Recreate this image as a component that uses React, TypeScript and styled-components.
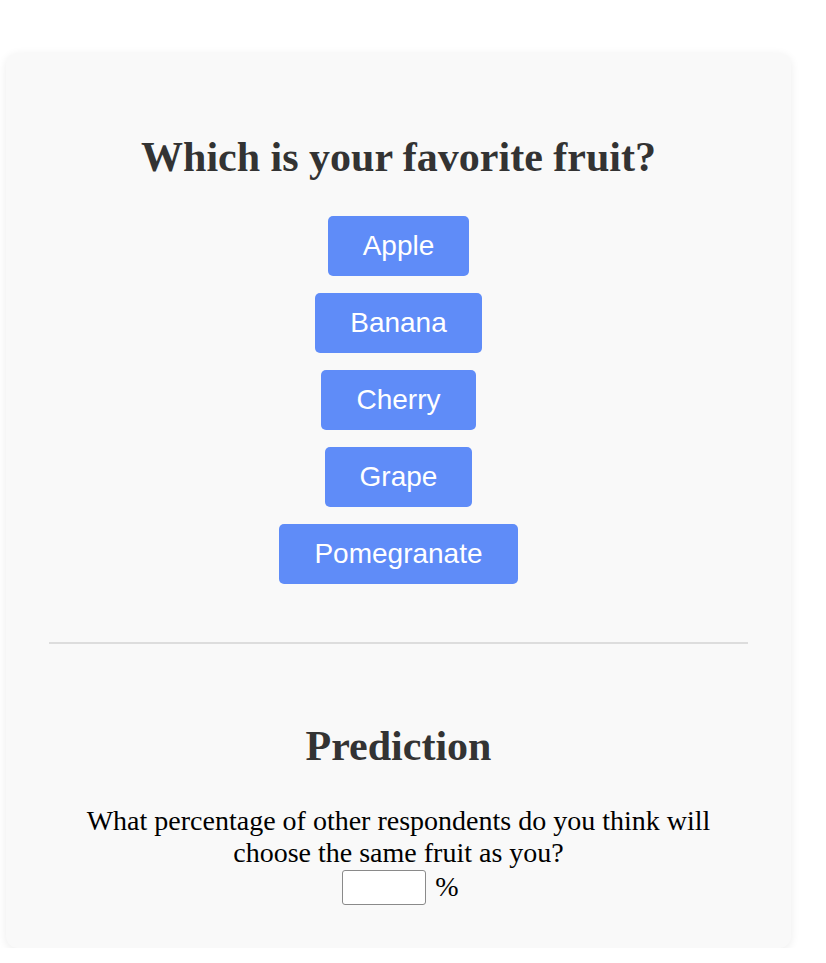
import React, { useState } from "react";
import styled, { createGlobalStyle } from "styled-components";

const GlobalStyle = createGlobalStyle`
  html, body {
    margin: 0;
    padding: 0;
    background: #ffffff;
  }
`;

const Card = styled.div`
  width: 785px;
  margin: 53px 0 0 6px;
  padding: 45px 43px 43px;
  box-sizing: border-box;
  background: #f9f9f9;
  border-radius: 12px;
  box-shadow: 0 2px 10px rgba(0, 0, 0, 0.08);
  font-family: "Liberation Serif", "Times New Roman", serif;
  text-align: center;
`;

const Heading = styled.h2`
  margin: 35px 0;
  font-size: 42px;
  font-weight: bold;
  color: #333333;
`;

const Options = styled.div`
  display: flex;
  flex-direction: column;
  align-items: center;
  gap: 17.5px;
`;

const FruitButton = styled.button`
  padding: 14px 35px;
  border: none;
  border-radius: 5px;
  background: #5f8cf8;
  color: #ffffff;
  font-family: "Liberation Sans", Arial, Helvetica, sans-serif;
  font-size: 28px;
  line-height: 31.5px;
  cursor: pointer;

  &:hover {
    background: #4f7ef0;
  }
`;

const Divider = styled.hr`
  margin: 58px 0 78px;
  border: none;
  border-top: 2px solid #dddddd;
`;

const Question = styled.p`
  margin: 0;
  font-size: 28px;
  line-height: 32px;
  color: #000000;
`;

const InputRow = styled.div`
  display: flex;
  justify-content: center;
  align-items: center;
  gap: 9px;
  margin: 1px 0 0 4px;
  font-size: 28px;
  color: #000000;
`;

const PercentInput = styled.input`
  width: 84px;
  height: 35px;
  box-sizing: border-box;
  padding: 2px 4px;
  border: 1px solid #8a8a8a;
  border-radius: 3px;
  background: #ffffff;
  font-size: 20px;
`;

const fruits = ["Apple", "Banana", "Cherry", "Grape", "Pomegranate"];

const App: React.FC = () => {
  const [choice, setChoice] = useState<string | null>(null);
  const [percent, setPercent] = useState("");

  return (
    <>
      <GlobalStyle />
      <Card>
        <Heading>Which is your favorite fruit?</Heading>
        <Options>
          {fruits.map((fruit) => (
            <FruitButton
              key={fruit}
              onClick={() => setChoice(fruit)}
              aria-pressed={choice === fruit}
            >
              {fruit}
            </FruitButton>
          ))}
        </Options>

        <Divider />

        <Heading>Prediction</Heading>
        <Question>
          What percentage of other respondents do you think will choose the
          same fruit as you?
        </Question>
        <InputRow>
          <PercentInput
            type="text"
            value={percent}
            onChange={(e) => setPercent(e.target.value)}
          />
          <span>%</span>
        </InputRow>
      </Card>
    </>
  );
};

export default App;
